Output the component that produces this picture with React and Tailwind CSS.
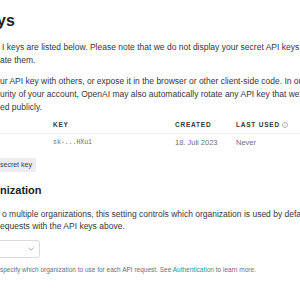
import React from "react";

// ── Sub-components ──────────────────────────────────────────

function InfoIcon() {
  return (
    <svg width="6" height="6" viewBox="0 0 12 12" fill="none" stroke="#8e8ea0" strokeWidth="1.2">
      <circle cx="6" cy="6" r="5.2" />
      <line x1="6" y1="5.2" x2="6" y2="8.8" />
      <circle cx="6" cy="3.4" r="0.5" fill="#8e8ea0" stroke="none" />
    </svg>
  );
}

function KeysTable() {
  return (
    <div className="mt-[2px] text-[#353740]">
      <div className="grid grid-cols-[53px_122px_61px_1fr] items-center h-[18px] border-b border-[#ececf1] text-[6.5px] font-bold tracking-[0.12em] text-[#353740]">
        <span />
        <span>KEY</span>
        <span>CREATED</span>
        <span className="flex items-center gap-[2px]">LAST USED <InfoIcon /></span>
      </div>
      <div className="grid grid-cols-[53px_122px_61px_1fr] items-center h-[18px] text-[#6e6e80]">
        <span />
        <span className="font-['Liberation_Mono',monospace] text-[6.5px]">sk-...HXu1</span>
        <span className="text-[7.5px]">18. Juli 2023</span>
        <span className="text-[7.5px]">Never</span>
      </div>
    </div>
  );
}

// ── Main Page ───────────────────────────────────────────────

export default function App() {
  return (
    <div className="w-[300px] h-[300px] overflow-hidden bg-white font-['Liberation_Sans',Arial,sans-serif] text-[#353740]">
      <div className="pt-[9px] whitespace-nowrap">
        <h1 className="text-[16px] leading-[24px] font-bold text-[#202123] -ml-[3px]">ys</h1>

        <div className="mt-[8px] text-[8.5px] leading-[13px]">
          <p className="ml-[2px]">I keys are listed below. Please note that we do not display your secret API keys again</p>
          <p>ate them.</p>
        </div>

        <div className="mt-[8px] text-[8.5px] leading-[13px]">
          <p>ur API key with others, or expose it in the browser or other client-side code. In order</p>
          <p>urity of your account, OpenAI may also automatically rotate any API key that we've found</p>
          <p>ed publicly.</p>
        </div>

        <KeysTable />

        <button className="mt-[6px] h-[14px] -ml-[4px] pl-[4px] pr-[4px] rounded-[2px] bg-[#ececf1] text-[7px] text-[#40414f] flex items-center">
          secret key
        </button>

        <h2 className="mt-[11px] h-[14px] text-[11px] leading-[14px] font-bold text-[#202123]">nization</h2>

        <div className="mt-[11px] text-[8.5px] leading-[12px]">
          <p className="ml-[2px]">o multiple organizations, this setting controls which organization is used by default</p>
          <p>equests with the API keys above.</p>
        </div>

        <div className="mt-[8px] h-[18px] w-[44px] -ml-[4px] border border-[#d9d9e3] rounded-[3px] flex items-center justify-end pr-[5px]">
          <svg width="6" height="4" viewBox="0 0 12 8" fill="none" stroke="#8e8ea0" strokeWidth="1.5" strokeLinecap="round" strokeLinejoin="round">
            <polyline points="1 1.5 6 6.5 11 1.5" />
          </svg>
        </div>

        <p className="mt-[7px] h-[10px] leading-[10px] text-[6.5px] text-[#6e6e80]">
          specify which organization to use for each API request. See <span className="text-[#10a37f]">Authentication</span> to learn more.
        </p>
      </div>
    </div>
  );
}
